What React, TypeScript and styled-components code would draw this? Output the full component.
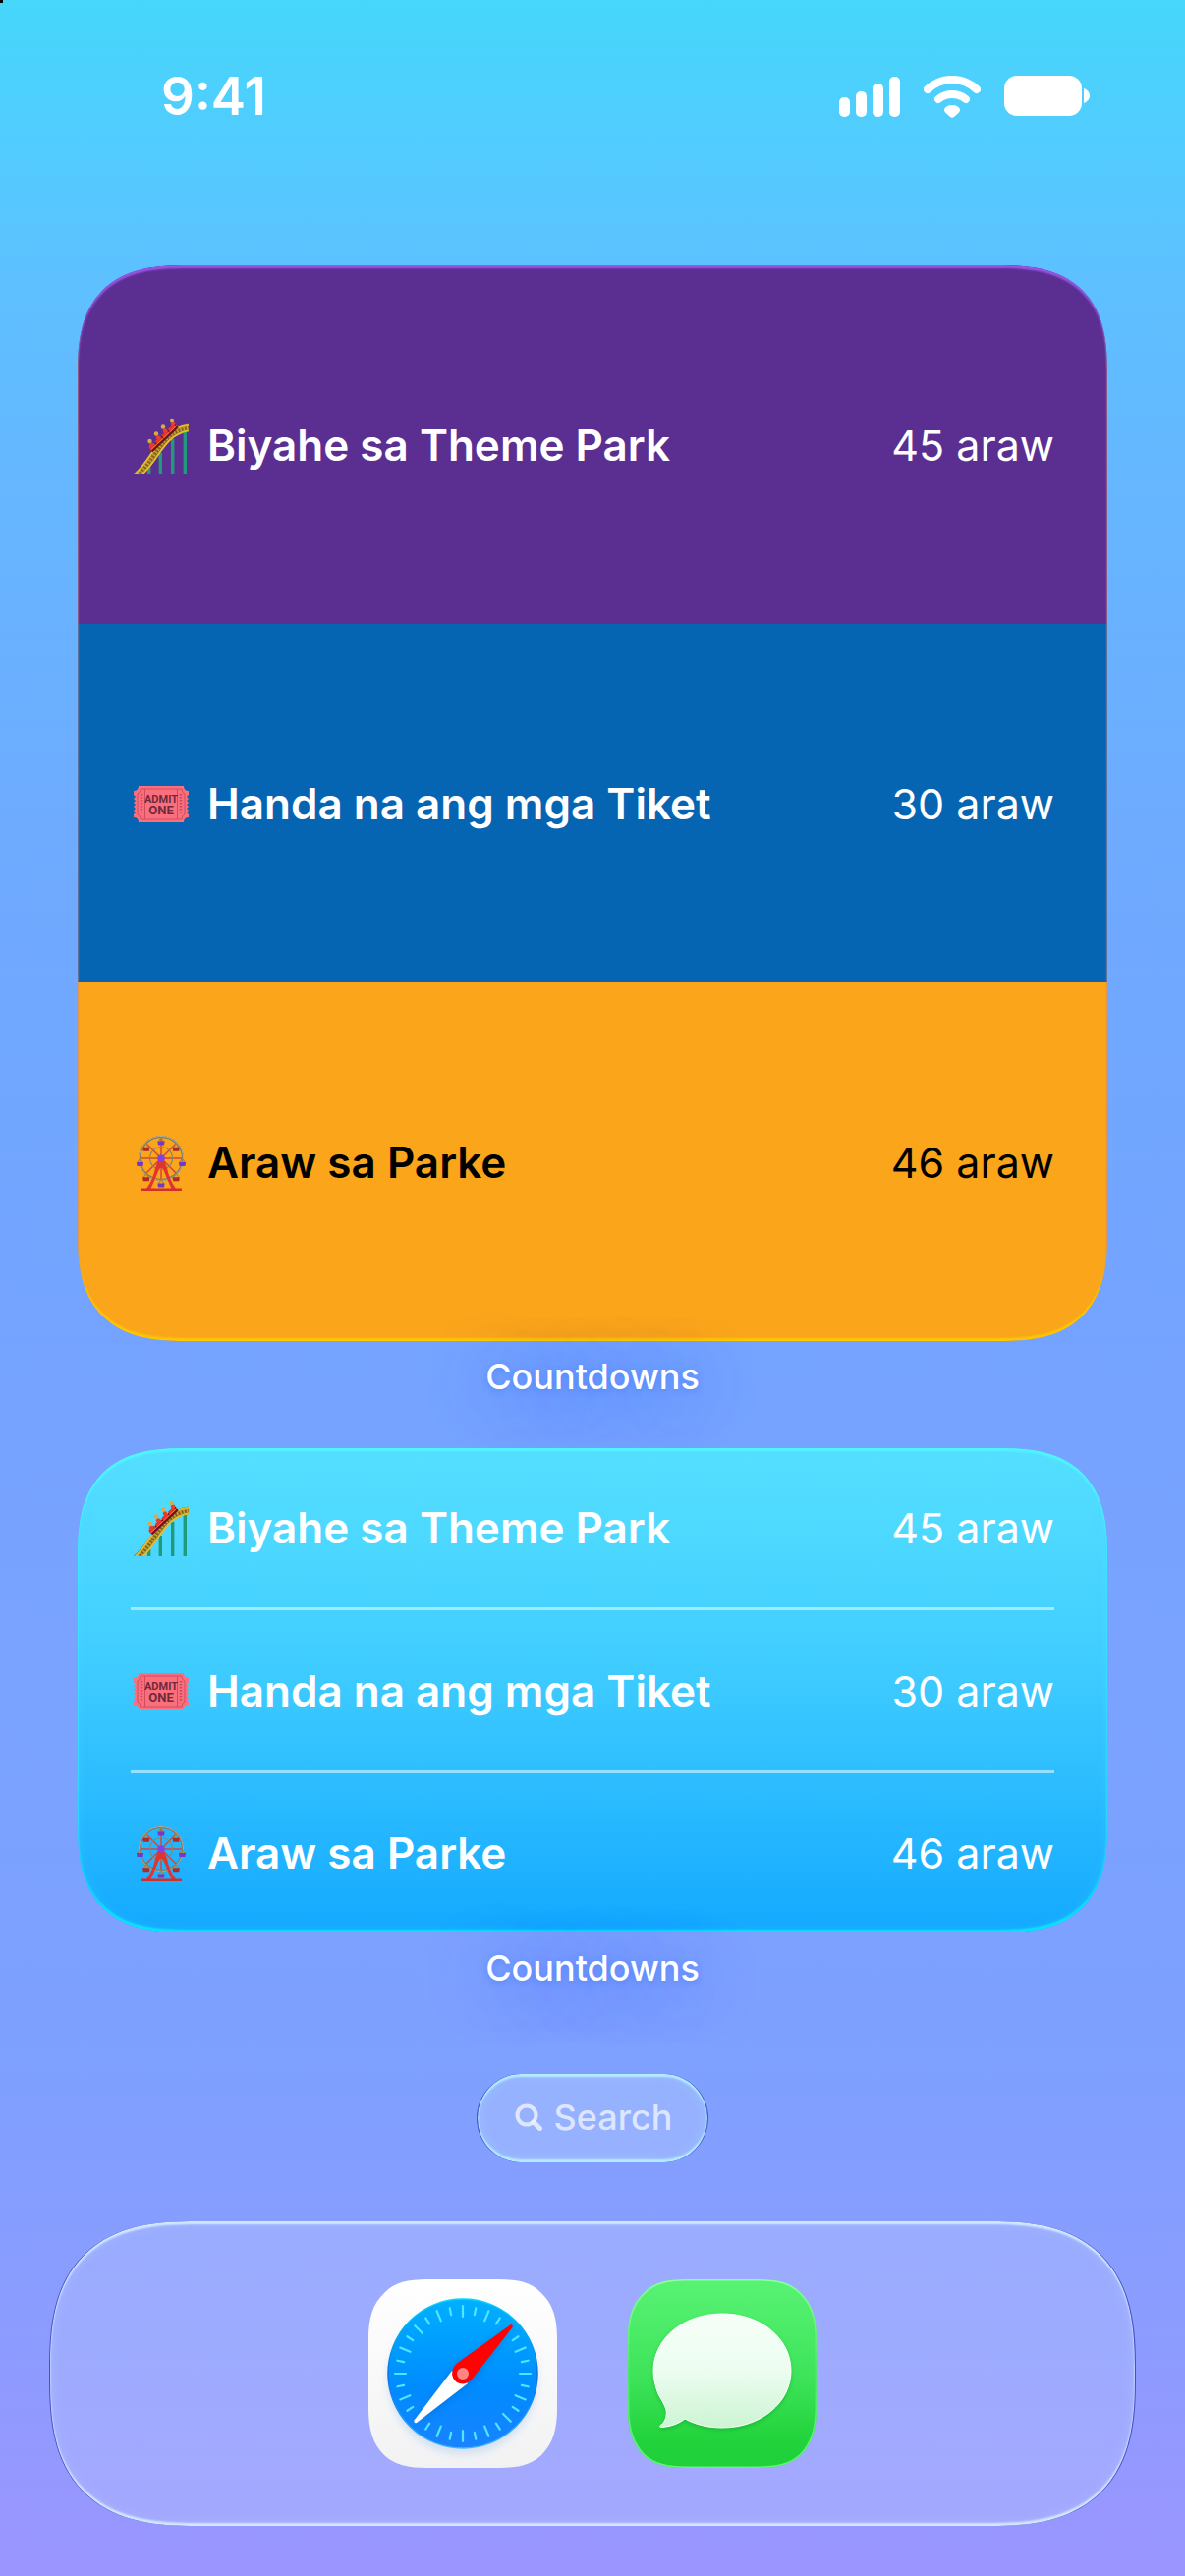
import React from 'react';
import styled, { createGlobalStyle, css } from 'styled-components';

const Global = createGlobalStyle`
  *, *::before, *::after { box-sizing: border-box; }
  html, body { margin: 0; }
  body {
    font-family: Inter, "Liberation Sans", sans-serif;
    color: #fff;
    background: #9b95ff;
  }
  button { font: inherit; color: inherit; border: 0; padding: 0; background: none; cursor: pointer; }
`;

const Screen = styled.div`
  min-height: 100vh;
  display: flex;
  flex-direction: column;
  background:
    linear-gradient(#000, #000) 0 0 / 3px 3px no-repeat,
    linear-gradient(180deg, #46d7fb 0%, #50cdfe 5%, #5ec0ff 11%, #66b5ff 20%, #6eabff 32%, #74a3ff 52%, #7aa3ff 66%, #7ea0ff 80%, #8b9cff 90%, #9b95ff 100%);
`;

const StatusBar = styled.header`
  display: flex;
  justify-content: space-between;
  align-items: center;
  height: 196px;
  padding: 0 96px 0 164px;
`;

const Clock = styled.time`
  font-size: 53px;
  line-height: 64px;
  font-weight: 600;
`;

const StatusIcons = styled.div`
  display: flex;
  align-items: center;
  gap: 24px;
  svg { display: block; }
`;

const Home = styled.main`
  display: flex;
  flex-direction: column;
  padding: 74px 79px 0;
`;

const WidgetGroup = styled.section`
  display: flex;
  flex-direction: column;
`;

/* Continuous-curvature corners, with a plain radius where they are not supported. */
const smoothCorner = (plain: number, smooth: number) => css`
  border-radius: ${plain}px;
  @supports (corner-shape: superellipse(1.4)) {
    border-radius: ${smooth}px;
    corner-shape: superellipse(1.4);
  }
`;

const Widget = styled.ul<{ $tone: 'stacked' | 'glass' }>`
  list-style: none;
  margin: 0;
  padding: 0;
  position: relative;
  display: flex;
  flex-direction: column;
  overflow: hidden;
  ${smoothCorner(86, 110)}
  ${({ $tone }) => $tone === 'glass' && css`
    padding: 0 54px;
    background: linear-gradient(180deg, #55dfff 0%, #44d0ff 38%, #2fbfff 66%, #14a9ff 100%);
  `}
  &::after {
    content: '';
    position: absolute;
    inset: 0;
    ${smoothCorner(86, 110)}
    pointer-events: none;
    box-shadow: ${({ $tone }) => $tone === 'glass'
      ? 'inset 0 3px 2px #4ff6ff, inset 0 -3px 2px #08e6ff, inset 0 0 12px rgba(80, 235, 255, 0.25)'
      : 'inset 0 3px 2px #9b55e6, inset 0 -3px 2px #ffc800'};
  }
`;

const Row = styled.li<{ $height: number; $fill?: string; $ink?: string; $inset?: number }>`
  display: flex;
  align-items: center;
  gap: 14px;
  height: ${p => p.$height}px;
  padding: 0 ${p => p.$inset ?? 0}px;
  background: ${p => p.$fill ?? 'transparent'};
  color: ${p => p.$ink ?? '#fff'};
  font-size: 44px;
  line-height: 56px;
`;

const Divider = styled.li`
  height: 3px;
  background: rgba(255, 255, 255, 0.5);
`;

const Pictogram = styled.svg`
  display: block;
  flex: none;
  width: 64px;
  height: 60px;
`;

const Title = styled.span`
  flex: 1;
  font-weight: 600;
  white-space: nowrap;
`;

const Days = styled.span`
  font-size: 43px;
  white-space: nowrap;
`;

const Caption = styled.h2`
  position: relative;
  margin: 0;
  height: 109px;
  padding-top: 14px;
  text-align: center;
  font-size: 36px;
  line-height: 44px;
  font-weight: 500;
  text-shadow: 0 2px 6px rgba(50, 110, 245, 0.4), 0 6px 60px rgba(50, 110, 245, 0.75);
`;

const SearchButton = styled.button`
  align-self: center;
  display: flex;
  align-items: center;
  gap: 12px;
  height: 90px;
  margin-top: 35px;
  padding: 0 36px 2px 38px;
  border-radius: 45px;
  background: rgba(175, 200, 255, 0.45);
  color: rgba(235, 240, 255, 0.86);
  font-size: 36px;
  line-height: 44px;
  font-weight: 500;
  border-left: 1px solid #4058c4;
  border-right: 1px solid #4058c4;
  box-shadow:
    inset 0 3px 2px #b4ecff,
    inset 0 -3px 2px #b4ecff,
    inset 0 0 14px rgba(180, 225, 255, 0.35);
  svg { flex: none; }
`;

const Dock = styled.nav`
  display: flex;
  justify-content: center;
  align-items: center;
  gap: 72px;
  margin: 60px 50px 51px;
  padding: 59px;
  ${smoothCorner(120, 150)}
  background: rgba(182, 196, 255, 0.4);
  border-left: 1px solid #4a50c0;
  border-right: 1px solid #4a50c0;
  box-shadow:
    inset 0 3px 2px #d2e8ff,
    inset 0 -3px 2px #d2e8ff,
    inset 0 0 14px rgba(195, 215, 255, 0.35);
`;

const AppButton = styled.button`
  display: block;
  width: 192px;
  height: 192px;
  svg { display: block; }
`;

function Coaster() {
  return (
    <Pictogram viewBox="0 0 64 60" aria-hidden="true">
      <defs>
        <clipPath id="coaster-frame"><path d="M0 0H59V59H0Z" /></clipPath>
      </defs>
      <g clipPath="url(#coaster-frame)">
        <path d="M18.700 52V60M30.300 38V60M42.700 24V60M55.300 16V60" stroke="#1f9a7c" strokeWidth="3.400" />
        <path d="M5 62C27 44 30 15 61 12" fill="none" stroke="#84651f" strokeWidth="7.500" />
        <path d="M3 61C24 43 28 12 61 9.500" fill="none" stroke="#e3bd30" strokeWidth="2" />
        <path d="M8 63C30 46 32 19 61 15" fill="none" stroke="#e3bd30" strokeWidth="2" />
        <path d="M5 62C27 44 30 15 61 12" fill="none" stroke="#c9a43a" strokeWidth="4" strokeDasharray="1.500 2" />
        <path d="M20.500 35.500L47 10.500" stroke="#6b1420" strokeWidth="5" />
        <path d="M19.500 34L46 9" stroke="#e8302c" strokeWidth="4" strokeDasharray="7.500 1.500" />
        <path d="M20.500 35L46.500 10.500" stroke="#f0802c" strokeWidth="1" />
        <g fill="#e2402e">
          <circle cx="21" cy="30" r="2.200" /><circle cx="28" cy="22.500" r="2.200" />
          <circle cx="35" cy="15.500" r="2.200" /><circle cx="43" cy="8.500" r="2.200" />
        </g>
        <g fill="#d9ab45">
          <circle cx="19.500" cy="26" r="2.200" /><circle cx="26" cy="18.500" r="2.200" />
          <circle cx="33" cy="11.500" r="2.200" /><circle cx="42" cy="5" r="2.200" />
        </g>
      </g>
    </Pictogram>
  );
}

function Ticket() {
  return (
    <Pictogram viewBox="0 0 64 60" aria-hidden="true">
      <path
        d="M8 12H54Q54 17 59 17V21L57 23L59 25L57 27L59 29L57 31L59 33L57 35L59 37L57 39L59 41V44Q54 44 54 49H8Q8 44 3 44V41L5 39L3 37L5 35L3 33L5 31L3 29L5 27L3 25L5 23L3 21V17Q8 17 8 12Z"
        fill="#fb6f7c"
      />
      <path d="M10 15H52Q52 19 55 20V41Q52 42 52 46H10Q10 42 7 41V20Q10 19 10 15ZM14.500 15V46M47.500 15V46" fill="none" stroke="#cf4d62" strokeWidth="1" />
      <path d="M11 20V41M51 20V41" stroke="#c14b60" strokeWidth="2.400" strokeDasharray="1.500 1.500" />
      <g fill="#6f2a3b" fontFamily="'Liberation Sans Narrow', Roboto, sans-serif" fontWeight="700" textAnchor="middle">
        <text x="31" y="29" fontSize="11">ADMIT</text>
        <text x="31" y="41" fontSize="13">ONE</text>
      </g>
    </Pictogram>
  );
}

const spokes = [0, 45, 90, 135, 180, 225, 270, 315];

function Wheel() {
  const cx = 31;
  const cy = 26;
  return (
    <Pictogram viewBox="0 0 64 60" aria-hidden="true">
      <g stroke="#d5463a" strokeWidth="1.500">
        {spokes.map(a => {
          const r = (a * Math.PI) / 180;
          return <path key={a} d={`M${cx} ${cy}L${cx + 22 * Math.cos(r)} ${cy + 22 * Math.sin(r)}`} />;
        })}
      </g>
      <circle cx={cx} cy={cy} r="22" fill="none" stroke="#77766a" strokeWidth="2" />
      <circle cx={cx} cy={cy} r="22.500" fill="none" stroke="#b5b09a" strokeWidth="1" />
      <circle cx={cx} cy={cy} r="11.500" fill="none" stroke="#8f8468" strokeWidth="1.200" />
      {spokes.map(a => {
        const r = (a * Math.PI) / 180;
        const x = cx + 21.5 * Math.cos(r);
        const y = cy + 21.5 * Math.sin(r) + 5;
        const fill = a % 90 === 0 ? '#7438c4' : '#ad2a25';
        return (
          <g key={a}>
            <path d={`M${x} ${y - 5}L${x - 3} ${y}M${x} ${y - 5}L${x + 3} ${y}`} stroke="#a8843e" strokeWidth="1.200" />
            <path d={`M${x - 3.6} ${y - 1}H${x + 3.6}L${x + 3} ${y + 3}H${x - 3}Z`} fill={fill} />
          </g>
        );
      })}
      <path d="M27.500 29H34.500L37 36Q39 47 46 57H41.500Q37 47 33.500 38Q31 33 28.500 38Q25 47 20.500 57H16Q23 47 25 36Z" fill="#e0342f" />
      <path d="M10 56.500H52V59H10Z" fill="#d42f2c" />
      <circle cx={cx} cy={cy} r="3.800" fill="#8142e0" />
    </Pictogram>
  );
}

const appShape =
  'M60 0H132C152 0 165 3 175 13C188 25 192 40 192 60V132C192 152 188 167 176 179C165 189 152 192 132 192H60C40 192 27 189 16 179C4 167 0 152 0 132V60C0 40 4 25 17 13C27 3 40 0 60 0Z';

function Safari() {
  const ticks = Array.from({ length: 32 }, (_, i) => i).filter(i => i !== 4 && i !== 20);
  return (
    <svg width="192" height="192" viewBox="0 0 192 192" aria-hidden="true">
      <defs>
        <linearGradient id="sf-bg" x2="0" y2="1"><stop stopColor="#fff" /><stop offset="1" stopColor="#f2f2f3" /></linearGradient>
        <linearGradient id="sf-dial" x2="0" y2="1"><stop stopColor="#00b0ff" /><stop offset=".6" stopColor="#008bff" /><stop offset="1" stopColor="#1a82ff" /></linearGradient>
        <linearGradient id="sf-rim" x2="0" y2="1">
          <stop stopColor="#00d8ff" /><stop offset=".5" stopColor="#0a70e0" /><stop offset="1" stopColor="#35baff" />
        </linearGradient>
        <filter id="sf-soft" x="-20%" y="-20%" width="140%" height="140%"><feGaussianBlur stdDeviation="4" /></filter>
      </defs>
      <path d={appShape} fill="url(#sf-bg)" />
      <circle cx="96" cy="102" r="76" fill="#b9d0f0" opacity=".6" filter="url(#sf-soft)" />
      <circle cx="96" cy="96" r="76" fill="url(#sf-dial)" stroke="url(#sf-rim)" strokeWidth="1.500" />
      <g stroke="#4fe6ff" strokeWidth="2.200" strokeLinecap="round">
        {ticks.map(i => (
          <path key={i} d={i % 2 ? 'M96 28V35' : 'M96 27V38'} transform={`rotate(${i * 11.25} 96 96)`} />
        ))}
      </g>
      <g filter="url(#sf-soft)" opacity=".3"><path d="M146 50L104 104L50 146L88 90Z" fill="#003c9c" /></g>
      <path d="M85 93L46.500 143.500Q46 147 49 146L101 106Z" fill="#fff" />
      <path d="M145 46Q147.500 46 146.500 49L105 102Q98 109 90 105Q82 98 87 89Q89 86 92 84Z" fill="#ff0202" />
      <circle cx="96" cy="96" r="6" fill="#ff8583" />
    </svg>
  );
}

function Messages() {
  const bubble =
    'M96 35C135 35 166 60 166 93C166 126 135 151 96 151C82 151 69 148 58 142C52 147 43 150 34 150.500C32 150.500 32 149 34 148C38 145 40 139 39 133C38 129 35 124 31 117C28 109 26 101 26 93C26 60 57 35 96 35Z';
  return (
    <svg width="192" height="192" viewBox="0 0 192 192" aria-hidden="true">
      <defs>
        <linearGradient id="ms-bg" x2="0" y2="1"><stop stopColor="#58f374" /><stop offset=".5" stopColor="#3fe45b" /><stop offset=".85" stopColor="#22d33c" /><stop offset="1" stopColor="#20cf3a" /></linearGradient>
        <linearGradient id="ms-edge" x2="0" y2="1"><stop stopColor="#8effa0" /><stop offset=".5" stopColor="#4fe668" /><stop offset="1" stopColor="#66f57c" /></linearGradient>
        <linearGradient id="ms-bubble" x2="0" y2="1"><stop stopColor="#f6fef7" /><stop offset=".5" stopColor="#ecfdf0" /><stop offset="1" stopColor="#cdf4d3" /></linearGradient>
        <clipPath id="ms-clip"><path d={appShape} /></clipPath>
        <filter id="ms-soft" x="-20%" y="-20%" width="140%" height="140%"><feGaussianBlur stdDeviation="2" /></filter>
      </defs>
      <path d={appShape} fill="url(#ms-bg)" />
      <g clipPath="url(#ms-clip)"><path d={appShape} fill="none" stroke="url(#ms-edge)" strokeWidth="3" /></g>
      <path d={bubble} fill="#0d9a25" opacity=".5" transform="translate(0 2)" filter="url(#ms-soft)" />
      <path d={bubble} fill="url(#ms-bubble)" stroke="#fff" strokeWidth="1" />
    </svg>
  );
}

const countdowns = [
  { title: 'Biyahe sa Theme Park', days: '45 araw', Icon: Coaster, fill: '#5b2f91', ink: '#fff' },
  { title: 'Handa na ang mga Tiket', days: '30 araw', Icon: Ticket, fill: '#0665b3', ink: '#fff' },
  { title: 'Araw sa Parke', days: '46 araw', Icon: Wheel, fill: '#faa51a', ink: '#000' },
];

export default function App() {
  return (
    <>
      <Global />
      <Screen>
        <StatusBar>
          <Clock>9:41</Clock>
          <StatusIcons>
            <svg width="62" height="42" viewBox="0 0 62 42" fill="#fff" aria-hidden="true">
              <rect x="0" y="22" width="11" height="20" rx="5" />
              <rect x="17" y="16" width="11" height="26" rx="5" />
              <rect x="34" y="8" width="11" height="34" rx="5" />
              <rect x="51" y="1" width="11" height="41" rx="5" />
            </svg>
            <svg width="58" height="43" viewBox="0 0 58 43" fill="none" stroke="#fff" strokeWidth="8" strokeLinecap="round" aria-hidden="true">
              <path d="M4 14A36 36 0 0 1 54 14" />
              <path d="M15 24A22 22 0 0 1 43 24" />
              <path d="M29 30C33 30 37 32 37 35C37 36 36.500 37 35.500 38L31 42Q29 43.500 27 42L22.500 38C21.500 37 21 36 21 35C21 32 25 30 29 30Z" fill="#fff" stroke="none" />
            </svg>
            <svg width="88" height="42" viewBox="0 0 88 42" fill="#fff" aria-hidden="true">
              <rect x="0" y="0" width="79" height="41" rx="13" />
              <path d="M81 13C84 14 87 17 87 20.500S84 27 81 28Z" />
            </svg>
          </StatusIcons>
        </StatusBar>

        <Home>
          <WidgetGroup>
            <Widget $tone="stacked">
              {countdowns.map(({ title, days, Icon, fill, ink }) => (
                <Row key={title} $height={365} $fill={fill} $ink={ink} $inset={54}>
                  <Icon />
                  <Title>{title}</Title>
                  <Days>{days}</Days>
                </Row>
              ))}
            </Widget>
            <Caption>Countdowns</Caption>
          </WidgetGroup>

          <WidgetGroup>
            <Widget $tone="glass">
              {countdowns.map(({ title, days, Icon }, i) => (
                <React.Fragment key={title}>
                  {i > 0 && <Divider role="separator" />}
                  <Row $height={i === 1 ? 163 : 162}>
                    <Icon />
                    <Title>{title}</Title>
                    <Days>{days}</Days>
                  </Row>
                </React.Fragment>
              ))}
            </Widget>
            <Caption>Countdowns</Caption>
          </WidgetGroup>

          <SearchButton type="button">
            <svg width="28" height="28" viewBox="0 0 28 28" fill="none" stroke="currentColor" strokeWidth="4" strokeLinecap="round" aria-hidden="true">
              <circle cx="12" cy="12" r="9.500" />
              <path d="M19 19L25.500 25.500" strokeWidth="5" />
            </svg>
            Search
          </SearchButton>
        </Home>

        <Dock aria-label="Dock">
          <AppButton type="button" aria-label="Safari"><Safari /></AppButton>
          <AppButton type="button" aria-label="Messages"><Messages /></AppButton>
        </Dock>
      </Screen>
    </>
  );
}
